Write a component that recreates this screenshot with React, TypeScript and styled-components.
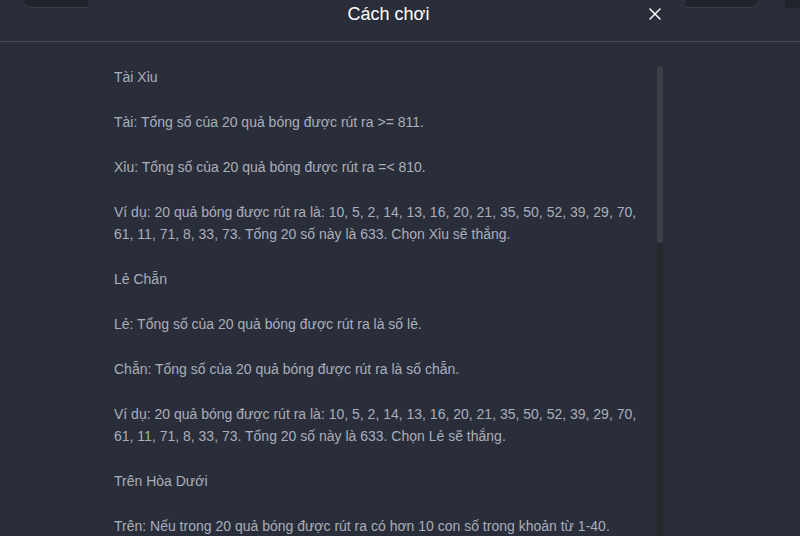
import React from 'react';
import styled, { createGlobalStyle } from 'styled-components';
import { X } from 'lucide-react';

const GlobalStyle = createGlobalStyle`
    html, body {
        margin: 0;
        padding: 0;
        background-color: #292e3a;
        overflow: hidden;
    }
    body {
        font-family: 'Liberation Sans', Arial, sans-serif;
    }
`

const Page = styled.div`
    width: 800px;
    height: 536px;
    background-color: #292e3a;
    overflow: hidden;
    position: relative;
`

// pieces of the page behind the modal that peek out at the top
const Peek = styled.div`
    position: absolute;
    top: 0;
    left: 0;
    right: 0;
    height: 8px;
    display: flex;
    gap: 27px;
    padding-left: 24px;
    pointer-events: none;
`

const PeekSpacer = styled.div`
    flex: 1;
`

const PeekBlock = styled.div<{ $width: number; $curve?: 'left' | 'right' }>`
    flex: 0 0 ${p => p.$width}px;
    height: 8px;
    background-color: #1f232b;
    border-bottom-left-radius: ${p => p.$curve === 'left' ? '20px' : '0'};
    border-bottom-right-radius: ${p => p.$curve === 'right' ? '20px' : '0'};
    box-shadow: ${p => p.$curve ? 'inset 0 -1px 0 rgba(255,255,255,0.12)' : 'none'};
`

const Header = styled.div`
    border-bottom: 1px solid #454b58;
    height: 41px;
`

const HeaderInner = styled.div`
    width: 549px;
    margin-left: 114px;
    height: 100%;
    display: grid;
    grid-template-columns: 22px 1fr 22px;
    align-items: start;
`

const Title = styled.div`
    grid-column: 2;
    text-align: center;
    color: #ffffff;
    font-size: 18px;
    line-height: 28px;
    font-family: 'Liberation Sans', Arial, sans-serif;
    position: relative;
    z-index: 1;
`

const CloseButton = styled.button`
    grid-column: 3;
    justify-self: end;
    margin-top: 3px;
    margin-right: -3px;
    width: 22px;
    height: 22px;
    padding: 0;
    border: none;
    background: transparent;
    color: #ffffff;
    display: flex;
    align-items: center;
    justify-content: center;
    cursor: pointer;
`

const Body = styled.div`
    width: 549px;
    height: 476px;
    margin-left: 114px;
    margin-top: 24px;
    display: flex;
    justify-content: space-between;
    overflow: hidden;
`

const Content = styled.div`
    width: 530px;
`

const ScrollTrack = styled.div`
    flex: 0 0 6px;
    height: 100%;
    background-color: #27282c;
    border-radius: 3px;
    display: flex;
    flex-direction: column;
`

const ScrollThumb = styled.div`
    height: 177px;
    background-color: #3b3e46;
    border-radius: 3px;
`

const Para = styled.p`
    margin: 0 0 23px 0;
    color: #a9afbb;
    font-size: 14px;
    line-height: 22px;
    font-family: 'Liberation Sans', Arial, sans-serif;
`

const rules = [
    'Tài Xỉu',
    'Tài: Tổng số của 20 quả bóng được rút ra >= 811.',
    'Xỉu: Tổng số của 20 quả bóng được rút ra =< 810.',
    'Ví dụ: 20 quả bóng được rút ra là: 10, 5, 2, 14, 13, 16, 20, 21, 35, 50, 52, 39, 29, 70, 61, 11, 71, 8, 33, 73. Tổng 20 số này là 633. Chọn Xỉu sẽ thắng.',
    'Lẻ Chẵn',
    'Lẻ: Tổng số của 20 quả bóng được rút ra là số lẻ.',
    'Chẵn: Tổng số của 20 quả bóng được rút ra là số chẵn.',
    'Ví dụ: 20 quả bóng được rút ra là: 10, 5, 2, 14, 13, 16, 20, 21, 35, 50, 52, 39, 29, 70, 61, 11, 71, 8, 33, 73. Tổng 20 số này là 633. Chọn Lẻ sẽ thắng.',
    'Trên Hòa Dưới',
    'Trên: Nếu trong 20 quả bóng được rút ra có hơn 10 con số trong khoản từ 1-40.',
]

class App extends React.Component {
    render() {
        return (
            <React.Fragment>
                <GlobalStyle />
                <Page>
                    <Peek>
                        <PeekBlock $width={64} $curve="left" />
                        <PeekSpacer />
                        <PeekBlock $width={72} $curve="right" />
                        <PeekBlock $width={15} />
                    </Peek>
                    <Header>
                        <HeaderInner>
                            <Title>Cách chơi</Title>
                            <CloseButton aria-label="close">
                                <X size={20} strokeWidth={1.8} />
                            </CloseButton>
                        </HeaderInner>
                    </Header>
                    <Body>
                        <Content>
                            {rules.map((text, i) => (
                                <Para key={i}>{text}</Para>
                            ))}
                        </Content>
                        <ScrollTrack>
                            <ScrollThumb />
                        </ScrollTrack>
                    </Body>
                </Page>
            </React.Fragment>
        )
    }
}

export default App;
